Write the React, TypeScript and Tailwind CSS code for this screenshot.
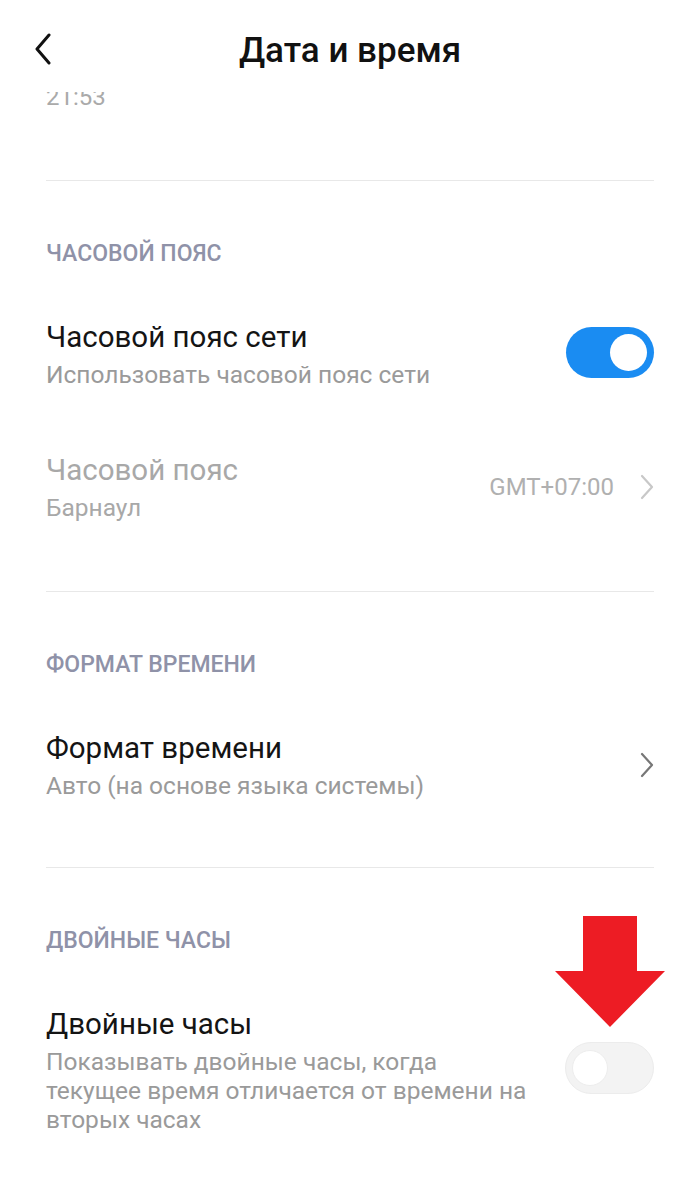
import React from "react";

const font = { fontFamily: "Roboto, 'Noto Sans', sans-serif" };

function Chevron({ className }: { className?: string }) {
  return (
    <svg width="14" height="26" viewBox="0 0 14 26" className={className} fill="none">
      <path d="M2 2 L12 13 L2 24" stroke="currentColor" strokeWidth="2.2" strokeLinecap="round" strokeLinejoin="round" />
    </svg>
  );
}

function Toggle({ on }: { on: boolean }) {
  return on ? (
    <div className="flex h-[51px] w-[88px] items-center justify-end rounded-full bg-[#1a8cf2] pr-[7px]">
      <div className="h-[37px] w-[37px] rounded-full bg-white" />
    </div>
  ) : (
    <div className="flex h-[52px] w-[89px] items-center rounded-full border border-[#ececec] bg-[#f3f3f3] pl-[6px]">
      <div className="h-[36px] w-[36px] rounded-full border border-[#ededed] bg-white" />
    </div>
  );
}

function SectionTitle({ children }: { children: React.ReactNode }) {
  return (
    <div className="pt-[61px] pb-[54px] text-[23px] font-medium leading-none text-[#8f92a8]">
      {children}
    </div>
  );
}

function Divider() {
  return <div className="h-px bg-[#e8e8e8]" />;
}

function Texts({ title, sub, muted }: { title: string; sub: React.ReactNode; muted?: boolean }) {
  return (
    <div>
      <div className={`text-[29.5px] leading-[36px] ${muted ? "text-[#a8a8a8]" : "text-[#141414]"}`}>{title}</div>
      <div className={`mt-[5px] text-[24.5px] leading-[29px] ${muted ? "text-[#a8a8a8]" : "text-[#9a9a9a]"}`}>{sub}</div>
    </div>
  );
}

export default function App() {
  return (
    <div className="min-h-[1189px] bg-white" style={font}>
      {/* Header */}
      <div className="relative flex h-[92px] items-center justify-center">
        <svg width="18" height="32" viewBox="0 0 18 32" className="absolute left-[34px] top-[33px]" fill="none">
          <path d="M15 2 L3 16 L15 30" stroke="#111" strokeWidth="3" strokeLinecap="round" strokeLinejoin="round" />
        </svg>
        <h1 className="mt-[10px] text-[35px] leading-[42px] font-medium text-[#111]">Дата и время</h1>
      </div>

      <div className="px-[46px]">
        {/* scrolled-off previous row */}
        <div className="h-[14px] overflow-hidden">
          <div className="-mt-[7px] text-[24px] leading-[24px] text-[#aaa]">21:53</div>
        </div>
        <div className="h-[74px]" />
        <Divider />

        <SectionTitle>ЧАСОВОЙ ПОЯС</SectionTitle>

        <div className="flex items-center justify-between">
          <Texts title="Часовой пояс сети" sub="Использовать часовой пояс сети" />
          <div className="-mt-[4px]">
            <Toggle on />
          </div>
        </div>

        <div className="flex items-center justify-between pt-[63px] pb-[69px]">
          <Texts title="Часовой пояс" sub="Барнаул" muted />
          <div className="flex items-center gap-[26px] text-[#b0b0b0]">
            <span className="text-[24px]">GMT+07:00</span>
            <Chevron className="text-[#c8c8c8]" />
          </div>
        </div>
        <Divider />

        <SectionTitle>ФОРМАТ ВРЕМЕНИ</SectionTitle>

        <div className="flex items-center justify-between pb-[67px]">
          <Texts title="Формат времени" sub="Авто (на основе языка системы)" />
          <Chevron className="text-[#777]" />
        </div>
        <Divider />

        <SectionTitle>ДВОЙНЫЕ ЧАСЫ</SectionTitle>

        <div className="relative flex items-center justify-between">
          <div className="w-[500px] whitespace-nowrap">
            <Texts
              title="Двойные часы"
              sub={
                <>
                  Показывать двойные часы, когда
                  <br />
                  текущее время отличается от времени на
                  <br />
                  вторых часах
                </>
              }
            />
          </div>
          <div className="-mt-[4px]">
            <Toggle on={false} />
          </div>
          {/* red annotation arrow */}
          <svg width="110" height="111" viewBox="0 0 110 111" className="absolute right-[-11px] top-[-90px]">
            <polygon points="28,0 82,0 82,55 110,55 55,111 0,55 28,55" fill="#ed1c24" />
          </svg>
        </div>
      </div>
    </div>
  );
}
